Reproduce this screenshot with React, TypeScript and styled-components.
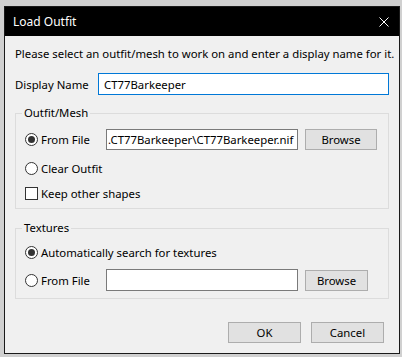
import styled, { createGlobalStyle } from 'styled-components';

const GlobalStyle = createGlobalStyle`
  html, body {
    margin: 0;
    padding: 0;
    background: #d0d0d0;
  }
  body {
    font-family: "Noto Sans", "Open Sans", sans-serif;
    font-size: 11.35px;
    color: #000;
  }
`;

const Page = styled.div`
  width: 402px;
  height: 357px;
  padding: 6px 2px 0 4px;
  box-sizing: border-box;
`;

const Window = styled.div`
  width: 396px;
  height: 348px;
  box-sizing: border-box;
  border: 1px solid #1a1a1a;
  background: #f0f0f0;
  display: flex;
  flex-direction: column;
`;

const TitleBar = styled.div`
  height: 29px;
  background: #000;
  color: #fff;
  display: flex;
  align-items: center;
  justify-content: space-between;
  padding: 0 10px 0 8px;
  font-size: 12px;
`;

const CloseIcon = () => (
  <svg width="10" height="10" viewBox="0 0 10 10">
    <path d="M0.5 0.5 L9.5 9.5 M9.5 0.5 L0.5 9.5" stroke="#fff" strokeWidth="1" />
  </svg>
);

const Body = styled.div`
  flex: 1;
  display: flex;
  flex-direction: column;
  padding: 10px 10px 0 10px;
`;

const Intro = styled.div`
  line-height: 16px;
  height: 16px;
  white-space: nowrap;
`;

const NameRow = styled.div`
  display: flex;
  align-items: center;
  margin-top: 11px;
`;

const NameLabel = styled.span`
  width: 83px;
  flex-shrink: 0;
`;

const TextBox = styled.div<{ $focused?: boolean; $height?: number; $pad?: number }>`
  flex: 1;
  min-width: 0;
  height: ${(p) => p.$height ?? 21}px;
  box-sizing: border-box;
  border: 1px solid ${(p) => (p.$focused ? '#0078d7' : '#7a7a7a')};
  background: #fff;
  display: flex;
  align-items: center;
  padding: 0 ${(p) => p.$pad ?? 5}px;
  white-space: nowrap;
  overflow: hidden;
`;

const Group = styled.fieldset<{ $top: number; $right: number }>`
  margin: ${(p) => p.$top}px 0 0 0;
  padding: 0 ${(p) => p.$right}px 7px 9px;
  border: 1px solid #dcdcdc;
  min-width: 0;
  display: flex;
  flex-direction: column;
`;

const Legend = styled.legend`
  padding: 0 2px;
  margin-left: -3px;
  line-height: 16px;
`;

const Row = styled.div<{ $gap: number }>`
  display: flex;
  align-items: center;
  margin-top: ${(p) => p.$gap}px;
  min-height: 16px;
`;

const Choice = styled.label<{ $width?: number }>`
  display: flex;
  align-items: center;
  gap: 3px;
  width: ${(p) => (p.$width ? `${p.$width}px` : 'auto')};
  flex-shrink: 0;
`;

const Radio = styled.span<{ $checked?: boolean }>`
  width: 13px;
  height: 13px;
  box-sizing: border-box;
  border-radius: 50%;
  border: 1px solid #333;
  background: #fff;
  display: flex;
  align-items: center;
  justify-content: center;
  &::after {
    content: '';
    width: 7px;
    height: 7px;
    border-radius: 50%;
    background: ${(p) => (p.$checked ? '#333' : 'transparent')};
  }
`;

const Check = styled.span`
  width: 13px;
  height: 13px;
  box-sizing: border-box;
  border: 1px solid #333;
  background: #fff;
`;

const FileRow = styled.div`
  flex: 1;
  min-width: 0;
  display: flex;
  align-items: center;
  gap: 7px;
`;

const Button = styled.button<{ $width: number }>`
  width: ${(p) => p.$width}px;
  height: 21px;
  box-sizing: border-box;
  border: 1px solid #adadad;
  background: #e1e1e1;
  font: inherit;
  color: #000;
  padding: 0;
  flex-shrink: 0;
`;

const Footer = styled.div`
  display: flex;
  justify-content: flex-end;
  gap: 10px;
  margin-top: 23px;
  padding-right: 5px;
`;

export default function App() {
  return (
    <>
      <GlobalStyle />
      <Page>
        <Window>
          <TitleBar>
            <span>Load Outfit</span>
            <CloseIcon />
          </TitleBar>
          <Body>
            <Intro>Please select an outfit/mesh to work on and enter a display name for it.</Intro>
            <NameRow>
              <NameLabel>Display Name</NameLabel>
              <TextBox $focused $height={22}>CT77Barkeeper</TextBox>
            </NameRow>

            <Group $top={10} $right={11}>
              <Legend>Outfit/Mesh</Legend>
              <Row $gap={8}>
                <Choice $width={81}>
                  <Radio $checked />
                  From File
                </Choice>
                <FileRow>
                  <TextBox $pad={1}>.CT77Barkeeper\CT77Barkeeper.nif</TextBox>
                  <Button $width={72}>Browse</Button>
                </FileRow>
              </Row>
              <Row $gap={10}>
                <Choice>
                  <Radio />
                  Clear Outfit
                </Choice>
              </Row>
              <Row $gap={9}>
                <Choice>
                  <Check />
                  Keep other shapes
                </Choice>
              </Row>
            </Group>

            <Group $top={11} $right={20}>
              <Legend>Textures</Legend>
              <Row $gap={8}>
                <Choice>
                  <Radio $checked />
                  Automatically search for textures
                </Choice>
              </Row>
              <Row $gap={9}>
                <Choice $width={81}>
                  <Radio />
                  From File
                </Choice>
                <FileRow>
                  <TextBox $height={22} />
                  <Button $width={63}>Browse</Button>
                </FileRow>
              </Row>
            </Group>

            <Footer>
              <Button $width={73}>OK</Button>
              <Button $width={73}>Cancel</Button>
            </Footer>
          </Body>
        </Window>
      </Page>
    </>
  );
}
